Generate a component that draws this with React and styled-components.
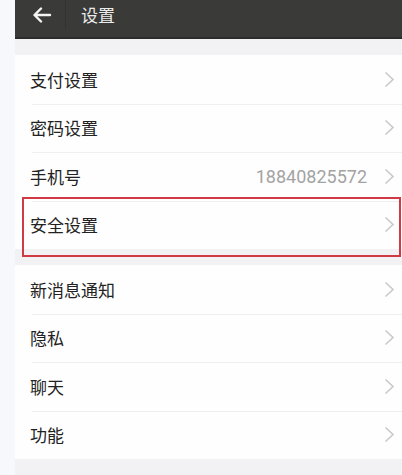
import React from "react";
import styled, { createGlobalStyle } from "styled-components";

const GlobalStyle = createGlobalStyle`
  html, body {
    margin: 0;
    padding: 0;
    background: #f7f8fc;
  }
  body {
    font-family: "Noto Sans CJK SC", "Liberation Sans", sans-serif;
  }
`;

const groups = [
  [
    { label: "支付设置" },
    { label: "密码设置" },
    { label: "手机号", value: "18840825572" },
    { label: "安全设置", marked: true },
  ],
  [
    { label: "新消息通知" },
    { label: "隐私" },
    { label: "聊天" },
    { label: "功能" },
  ],
];

const Chevron = () => (
  <svg width="11" height="17" viewBox="0 0 11 17" fill="none">
    <path d="M1.5 1.5 L9 8.5 L1.5 15.5" stroke="#c9c9cc" strokeWidth="1.6" />
  </svg>
);

const BackArrow = () => (
  <svg width="20" height="16" viewBox="0 0 20 16" fill="none">
    <path
      d="M18 8 H3 M9 1.5 L2.5 8 L9 14.5"
      stroke="#f4f4f4"
      strokeWidth="2.4"
      strokeLinecap="round"
      strokeLinejoin="round"
    />
  </svg>
);

const App = () => {
  return (
    <>
      <GlobalStyle />
      <StyledPage>
        <StyledHeader>
          <StyledBack>
            <BackArrow />
          </StyledBack>
          <StyledTitle>设置</StyledTitle>
        </StyledHeader>
        <StyledBody>
          {groups.map((rows, gi) => (
            <StyledGroup key={gi}>
              {rows.map((row) => (
                <StyledRow key={row.label}>
                  <StyledLabel>{row.label}</StyledLabel>
                  {row.value && <StyledValue>{row.value}</StyledValue>}
                  <StyledArrow>
                    <Chevron />
                  </StyledArrow>
                  {row.marked && <StyledMark />}
                </StyledRow>
              ))}
            </StyledGroup>
          ))}
        </StyledBody>
      </StyledPage>
    </>
  );
};

export default App;

const StyledPage = styled.div`
  width: 402px;
  height: 475px;
  overflow: hidden;
  padding-left: 15px;
  box-sizing: border-box;
`;

const StyledHeader = styled.div`
  height: 37px;
  background: #3a3b39;
  border-bottom: 2px solid #2c2d2b;
  display: flex;
  align-items: flex-start;
`;

const StyledBack = styled.div`
  width: 51px;
  height: 29px;
  display: flex;
  align-items: center;
  justify-content: center;
  border-right: 1px solid #333432;
  box-sizing: border-box;
  padding-left: 4px;
`;

const StyledTitle = styled.div`
  color: #ececec;
  font-size: 17px;
  line-height: 29px;
  margin-left: 15px;
`;

const StyledBody = styled.div`
  background: #f2f2f4;
  padding-top: 16px;
  display: flex;
  flex-direction: column;
  gap: 16px;
  height: 100%;
`;

const StyledGroup = styled.div`
  background: #fefefe;
  display: flex;
  flex-direction: column;
`;

const StyledRow = styled.div`
  position: relative;
  height: 48.5px;
  display: flex;
  align-items: center;
  padding: 0 7px 0 15px;

  & + &::before {
    content: "";
    position: absolute;
    left: 17px;
    right: 0;
    top: 0;
    height: 1px;
    background: #efeff1;
  }
`;

const StyledLabel = styled.span`
  flex: 1;
  font-size: 17px;
  color: #222;
`;

const StyledValue = styled.span`
  font-family: "Roboto", "Liberation Sans", sans-serif;
  font-size: 18px;
  color: #a3a3a3;
  margin-right: 17px;
`;

const StyledArrow = styled.span`
  display: flex;
  align-items: center;
`;

const StyledMark = styled.div`
  position: absolute;
  left: 7px;
  right: 1px;
  top: -4px;
  bottom: -8px;
  border: 2px solid #cf3a45;
  pointer-events: none;
`;
